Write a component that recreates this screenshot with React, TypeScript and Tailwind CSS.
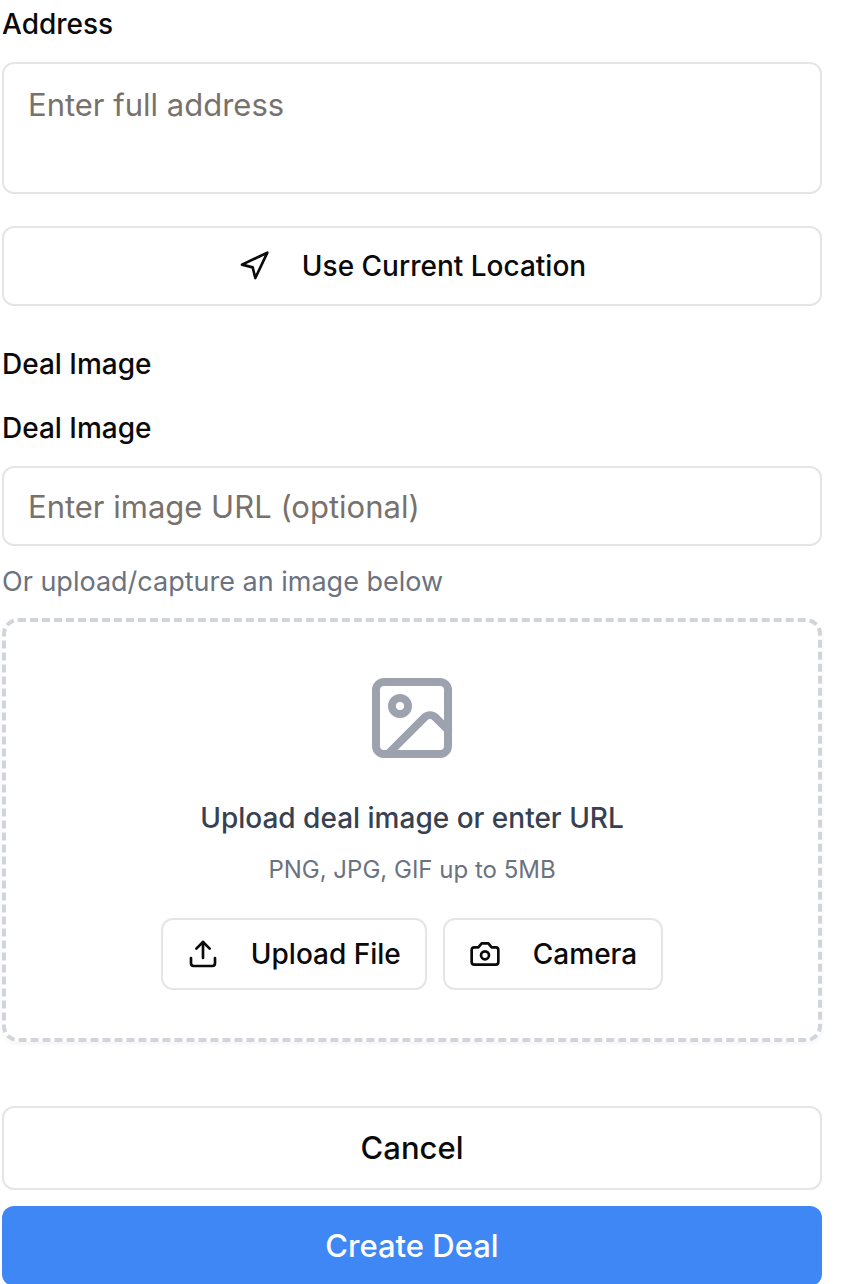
import { Image, Navigation, Upload } from "lucide-react";

const outline =
  "flex items-center justify-center rounded-[12px] border-2 border-[#e5e5e5] bg-white font-medium text-[#0a0a0a]";

function CameraIcon() {
  return (
    <svg
      width="32"
      height="32"
      viewBox="0 0 24 24"
      fill="none"
      stroke="currentColor"
      strokeWidth="2"
      strokeLinecap="round"
      strokeLinejoin="round"
      aria-hidden="true"
    >
      <path d="M14.5 4h-5L7 7H4a2 2 0 0 0-2 2v9a2 2 0 0 0 2 2h16a2 2 0 0 0 2-2V9a2 2 0 0 0-2-2h-3l-2.5-3z" />
      <circle cx="12" cy="13" r="3" />
    </svg>
  );
}

export default function App() {
  return (
    <form
      className="flex flex-col bg-white pl-[2px] pr-[30px] text-[28px] leading-7 text-[#0a0a0a]"
      style={{ fontFamily: 'Inter, "Liberation Sans", sans-serif' }}
      onSubmit={(e) => e.preventDefault()}
    >
      <label htmlFor="address" className="mt-[10px] font-medium">
        Address
      </label>
      <textarea
        id="address"
        placeholder="Enter full address"
        className="mt-6 h-[132px] w-full resize-none rounded-[12px] border-2 border-[#e5e5e5] bg-white px-6 py-4 text-[31px] leading-[50px] outline-none placeholder:text-[#78716c]"
      />
      <button type="button" className={`${outline} mt-8 h-20 gap-8`}>
        <Navigation size={32} strokeWidth={2} />
        Use Current Location
      </button>

      <h3 className="mt-[44px] font-medium">Deal Image</h3>
      <label htmlFor="image-url" className="mt-9 font-medium">
        Deal Image
      </label>
      <input
        id="image-url"
        type="text"
        placeholder="Enter image URL (optional)"
        className="mt-6 h-20 w-full rounded-[12px] border-2 border-[#e5e5e5] bg-white px-6 text-[31px] outline-none placeholder:text-[#78716c]"
      />
      <p className="mt-4 text-[27px] leading-10 text-[#6b7280]">Or upload/capture an image below</p>

      <section className="mt-4 flex flex-col items-center rounded-[16px] border-4 border-dashed border-[#d1d5db] px-12 pb-12 pt-12 shadow-[0_2px_4px_rgba(0,0,0,0.05)]">
        <Image size={96} strokeWidth={2} className="text-[#9ca3af]" />
        <p className="mt-8 leading-10 font-medium text-[#374151]">Upload deal image or enter URL</p>
        <p className="mt-4 text-2xl leading-8 text-[#6b7280]">PNG, JPG, GIF up to 5MB</p>
        <div className="mt-8 flex gap-4">
          <button type="button" className={`${outline} h-[72px] gap-8 px-6`}>
            <Upload size={32} strokeWidth={2} />
            Upload File
          </button>
          <button type="button" className={`${outline} h-[72px] gap-8 px-6`}>
            <CameraIcon />
            Camera
          </button>
        </div>
      </section>

      <button type="button" className={`${outline} mt-16 h-[84px] text-[31px]`}>
        Cancel
      </button>
      <button
        type="submit"
        className="mt-4 h-20 rounded-[12px] bg-[#3f87f5] text-[31px] font-medium text-white"
      >
        Create Deal
      </button>
    </form>
  );
}
